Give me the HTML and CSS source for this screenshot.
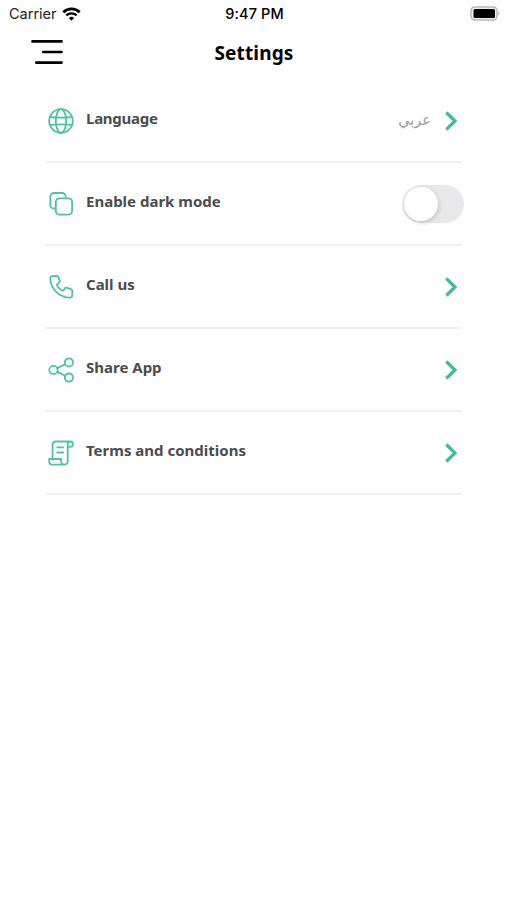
FILE: index.html
```
<!DOCTYPE html>
<html lang="en">
<head>
  <meta charset="UTF-8">
  <meta name="viewport" content="width=device-width, initial-scale=1.0">
  <title>Settings</title>
  <link rel="stylesheet" href="styles.css">
</head>
<body>

  <!-- Status bar -->
  <div class="status-bar">
    <div class="carrier">
      <span class="carrier-name">Carrier</span>
      <svg class="wifi" width="19" height="14" viewBox="0 0 19 14">
        <path d="M1.3 5.2a11.8 11.8 0 0 1 16.4 0" fill="none" stroke="#000" stroke-width="2.6"/>
        <path d="M4.3 8.4a7.5 7.5 0 0 1 10.4 0" fill="none" stroke="#000" stroke-width="2.3"/>
        <path d="M9.5 13.8L6.8 11.1a3.9 3.9 0 0 1 5.4 0z"/>
      </svg>
    </div>
    <span class="time">9:47 PM</span>
    <svg class="battery" width="31" height="15" viewBox="0 0 31 15">
      <rect x="1" y="1" width="26" height="13" rx="4" fill="#eee" stroke="#bbb" stroke-width="1.6"/>
      <rect x="3.5" y="3" width="21.5" height="9" rx="1.5"/>
      <path d="M28.3 5.2q2.4 2.3 0 4.6z" fill="#aaa"/>
    </svg>
  </div>

  <!-- Header -->
  <header class="header">
    <svg class="menu" width="34" height="28" viewBox="0 0 34 28">
      <path d="M2.5 3.4h29M13.3 14h18.2M6.3 24.6h25.2" stroke="#000" stroke-width="2.7" stroke-linecap="round"/>
    </svg>
    <h1>Settings</h1>
  </header>

  <!-- Settings list -->
  <main class="list">
    <div class="row">
      <svg class="icon" viewBox="0 0 26 26">
        <circle cx="13" cy="13" r="11.8"/>
        <ellipse cx="13" cy="13" rx="5.2" ry="11.8"/>
        <path d="M2 9.1q11 1 22 0M2 16.9q11-1 22 0"/>
      </svg>
      <span class="label language">Language</span>
      <span class="value" lang="ar" dir="rtl">عربي</span>
      <svg class="chevron" viewBox="0 0 14 22"><path d="M2.3 2.5L11 11l-8.7 8.5"/></svg>
    </div>

    <div class="row">
      <svg class="icon" viewBox="0 0 26 26">
        <path d="M7.5 17.5H5.8a3.5 3.5 0 0 1-3.5-3.5V5.5A3.5 3.5 0 0 1 5.8 2h8.4a3.5 3.5 0 0 1 3.5 3.5v1.8"/>
        <rect x="7.8" y="7.4" width="16.3" height="16.3" rx="3.7"/>
      </svg>
      <span class="label">Enable dark mode</span>
      <span class="toggle"><span class="knob"></span></span>
    </div>

    <div class="row">
      <svg class="icon" viewBox="0 0 26 26">
        <path d="M2.2 3.8Q2.4 2.2 4.1 2.1L8.8 2Q10 2 10.4 3l1.3 3.9q.3 1-.5 1.7L9.2 10.2q-.5.5-.2 1.2a12 12 0 0 0 5.4 5.2q.7.3 1.2-.3l1.6-2.2q.6-.8 1.6-.4l4.4 1.6q1.1.4 1.1 1.5l-.1 4.8q-.1 1.8-1.9 2A20 20 0 0 1 2.2 3.8z"/>
      </svg>
      <span class="label">Call us</span>
      <svg class="chevron" viewBox="0 0 14 22"><path d="M2.3 2.5L11 11l-8.7 8.5"/></svg>
    </div>

    <div class="row">
      <svg class="icon" viewBox="0 0 26 26">
        <circle cx="5.5" cy="13" r="4.2"/>
        <circle cx="20.9" cy="5.4" r="4.1"/>
        <circle cx="20.9" cy="20.6" r="4.1"/>
        <path d="M9.3 11.1l7.9-3.9M9.3 14.9l7.9 3.9"/>
      </svg>
      <span class="label">Share App</span>
      <svg class="chevron" viewBox="0 0 14 22"><path d="M2.3 2.5L11 11l-8.7 8.5"/></svg>
    </div>

    <div class="row">
      <svg class="icon" viewBox="0 0 26 26">
        <path d="M4.6 19V4.7a3.2 3.2 0 0 1 3.2-3.2h14.4a2.7 2.7 0 0 1 0 5.4h-2.5M22 1.5a2.4 2.4 0 0 0-2.3 2.7v17a3.5 3.5 0 0 1-3.5 3.5H4.4a3.2 3.2 0 0 1-3.2-3.2V19h11.9v2.4a3.1 3.1 0 0 0 3.1 3.3"/>
        <path d="M9.2 7.3h6M9.2 12.5h6"/>
      </svg>
      <span class="label">Terms and conditions</span>
      <svg class="chevron" viewBox="0 0 14 22"><path d="M2.3 2.5L11 11l-8.7 8.5"/></svg>
    </div>
  </main>

</body>
</html>
```
FILE: styles.css
```
body {
  margin: 0;
  min-height: 100vh;
  background-color: #fefefe;
  font-family: "Noto Sans", "DejaVu Sans", sans-serif;
  color: #000;
}

/* Status bar */
.status-bar {
  display: grid;
  grid-template-columns: 1fr auto 1fr;
  align-items: center;
  height: 27px;
  padding: 0 7px 0 9px;
  font-family: Inter, "Liberation Sans", sans-serif;
  font-size: 14px;
}

.carrier {
  display: flex;
  align-items: center;
  gap: 5px;
  color: #222;
}

.carrier-name {
  font-size: 14.5px;
}

.time {
  font-size: 14.5px;
  font-weight: 500;
  letter-spacing: 0.1px;
}

.battery {
  justify-self: end;
  margin-right: -1px;
}

/* Header */
.header {
  display: grid;
  grid-template-columns: 34px 1fr 34px;
  align-items: center;
  height: 53px;
  padding: 0 30px;
}

.menu {
  margin-bottom: 3px;
}

.header h1 {
  margin: 0;
  padding: 0 0 2px 1px;
  text-align: center;
  font-size: 19px;
  font-weight: 700;
  letter-spacing: 0.15px;
}

/* List rows */
.list {
  margin: 0 45px;
}

.row {
  display: flex;
  align-items: center;
  box-sizing: border-box;
  height: 83px;
  padding: 0 4px 0 3px;
  border-bottom: 2px solid #f1f1f1;
}

.icon {
  width: 26px;
  height: 26px;
  margin-right: 12px;
  fill: none;
  stroke: #4fc2a3;
  stroke-width: 1.8;
  stroke-linecap: round;
  stroke-linejoin: round;
}

.label {
  flex: 1;
  padding-bottom: 5px;
  font-size: 15px;
  font-weight: 700;
  color: #4c4c4c;
}

.language {
  letter-spacing: -0.25px;
}

.value {
  margin-right: 13px;
  padding-bottom: 4px;
  font-size: 14.5px;
  color: #999;
}

.chevron {
  width: 14px;
  height: 22px;
  fill: none;
  stroke: #3fbb9b;
  stroke-width: 3.2;
}

/* Dark mode switch */
.toggle {
  display: flex;
  align-items: center;
  box-sizing: border-box;
  width: 62px;
  height: 38px;
  margin-right: -6px;
  padding: 2px;
  border-radius: 19px;
  background-color: #e8e8ea;
}

.knob {
  width: 34px;
  height: 34px;
  border-radius: 50%;
  background-color: #fff;
  box-shadow: 1px 2px 4px rgba(0, 0, 0, 0.15);
}
```
